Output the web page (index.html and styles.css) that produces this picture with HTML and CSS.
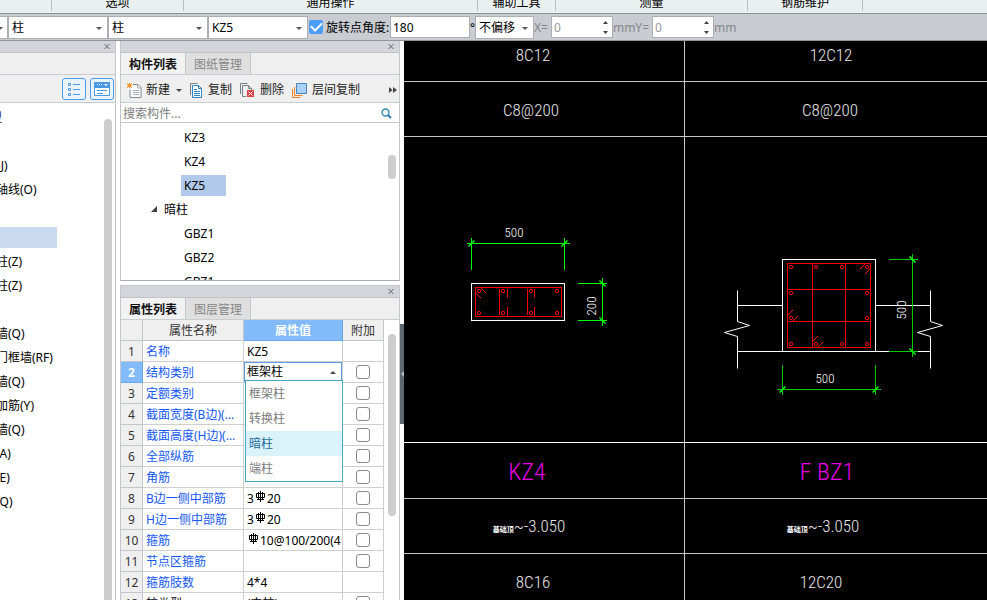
FILE: index.html
```html
<!DOCTYPE html>
<html lang="zh-CN">
<head>
<meta charset="utf-8">
<title>构件列表</title>
<link rel="stylesheet" href="styles.css">
</head>
<body>
<header class="ribbon">
  <div class="group g-first"></div>
  <div class="group g-options">选项</div>
  <div class="group g-common">通用操作</div>
  <div class="group g-aux">辅助工具</div>
  <div class="group g-measure">测量</div>
  <div class="group g-rebar">钢筋维护</div>
</header>

<div class="optbar">
  <div class="combo combo-cut"><select aria-label="楼层"><option></option></select><svg class="caret" viewBox="0 0 6 3"><path d="M0 0h6L3 3z"/></svg></div>
  <div class="combo"><select aria-label="构件分类"><option>柱</option></select><svg class="caret" viewBox="0 0 6 3"><path d="M0 0h6L3 3z"/></svg></div>
  <div class="combo"><select aria-label="构件类型"><option>柱</option></select><svg class="caret" viewBox="0 0 6 3"><path d="M0 0h6L3 3z"/></svg></div>
  <div class="combo"><select aria-label="构件"><option>KZ5</option></select><svg class="caret" viewBox="0 0 6 3"><path d="M0 0h6L3 3z"/></svg></div>
  <label class="rotate"><input type="checkbox" class="tick" checked><span>旋转点角度:</span></label>
  <input class="angle" type="text" value="180" aria-label="旋转点角度">
  <span class="degree">°</span>
  <div class="combo combo-small"><select aria-label="偏移"><option>不偏移</option></select><svg class="caret" viewBox="0 0 6 3"><path d="M0 0h6L3 3z"/></svg></div>
  <label class="unit" for="offx">X=</label>
  <div class="spin"><input id="offx" type="text" value="0" disabled><svg viewBox="0 0 5 13"><path d="M0 3h5L2.5 0zM0 10h5L2.5 13z"/></svg></div>
  <span class="unit">mm</span><label class="unit" for="offy">Y=</label>
  <div class="spin"><input id="offy" type="text" value="0" disabled><svg viewBox="0 0 5 13"><path d="M0 3h5L2.5 0zM0 10h5L2.5 13z"/></svg></div>
  <span class="unit">mm</span>
</div>

<div class="work">
  <aside class="nav">
    <div class="titlebar"><button class="close" aria-label="关闭"><svg viewBox="0 0 6 5"><path d="M.5 0l5 5M5.5 0l-5 5"/></svg></button></div>
    <div class="nav-head"></div>
    <div class="nav-tools">
      <button class="view" aria-label="列表"><svg width="14" height="14" viewBox="0 0 14 14"><path d="M1.500 1.500h2v2h-2zM1.500 6.500h2v2h-2zM1.500 11.500h2v2h-2zM6 2.500h7M6 7.500h7M6 12.500h7" fill="none" stroke="#4a98e6"/></svg></button>
      <button class="view" aria-label="卡片"><svg width="16" height="14" viewBox="0 0 16 14"><path d="M.5.5h15v13h-15z" fill="#fff" stroke="#4a98e6"/><path d="M0 0h16v6h-16z" fill="#4a98e6"/><path d="M3 2.500h1M5 2.500h1M7 2.500h1" stroke="#fff"/><path d="M10 2h4l-2 2z" fill="#fff"/><path d="M3 8.500h10M3 11.500h6" stroke="#4a98e6"/></svg></button>
    </div>
    <div class="nav-body">
      <ul class="nav-list">
        <li class="navy">型</li><li></li><li>(J)</li><li>轴线(O)</li><li></li><li class="current"></li>
        <li>柱(Z)</li><li>柱(Z)</li><li></li><li>墙(Q)</li><li>门框墙(RF)</li><li>墙(Q)</li><li>加筋(Y)</li><li>墙(Q)</li><li>(A)</li><li>(E)</li><li>(Q)</li>
      </ul>
      <div class="scroll nav-scroll"></div>
    </div>
  </aside>

  <div class="middle">
    <section class="panel panel-list">
      <div class="titlebar"><button class="close" aria-label="关闭"><svg viewBox="0 0 6 5"><path d="M.5 0l5 5M5.5 0l-5 5"/></svg></button></div>
      <div class="tabs"><button class="tab on">构件列表</button><button class="tab">图纸管理</button></div>
      <div class="tools">
        <button class="tool t-new"><svg width="15" height="15" viewBox="0 0 15 15"><path d="M6 1.500h5l3 3v10h-11v-8" fill="#fff" stroke="#7d8c98"/><path d="M10.500 1.500v3.500h3.500M6 7.500h6M6 9.500h6M6 11.500h6" fill="none" stroke="#a9b3bb"/><path d="M0 0l5 5M5 0l-5 5M2.500 0v5M0 2.500h5" stroke="#f0932b"/></svg>新建<svg class="caret-in" width="6" height="3" viewBox="0 0 6 3"><path d="M0 0h6L3 3z"/></svg></button>
        <button class="tool"><svg width="13" height="15" viewBox="0 0 13 15"><path d="M.5 12v-11.500h7" fill="none" stroke="#75828c"/><path d="M2.500 2.500h6l3 3v9h-9z" fill="#fff" stroke="#2c83c8"/><path d="M8.500 2.500v3h3M4 6.500h3M4 8.500h6M4 10.500h6M4 12.500h6" fill="none" stroke="#2c83c8"/></svg>复制</button>
        <button class="tool"><svg width="15" height="15" viewBox="0 0 15 15"><path d="M.5 11v-10.500h7M6 13.500h-3.500v-11h6l3 3v2M8.500 2.500v3h3" fill="none" stroke="#75828c"/><path d="M7 7h7v7h-7z" fill="#d64545"/><path d="M8.500 8.500l4 4M12.500 8.500l-4 4" stroke="#fff"/></svg>删除</button>
        <button class="tool"><svg width="15" height="15" viewBox="0 0 15 15"><path d="M.5 6v8.500h8M2.500 4v8.500h8" fill="none" stroke="#ef7d28"/><path d="M4.500.5h10v10h-10z" fill="#a9d0fa" stroke="#4a84bd"/></svg>层间复制</button>
        <button class="more" aria-label="更多"><svg width="8" height="6" viewBox="0 0 8 6"><path d="M0 0l3.500 3L0 6zM4 0l4 3L4 6z"/></svg></button>
      </div>
      <div class="search"><input type="text" placeholder="搜索构件..." aria-label="搜索构件"><svg width="11" height="11" viewBox="0 0 11 11"><circle cx="4.500" cy="4.500" r="3.500" fill="#eef7fd" stroke="#3c8dbc" stroke-width="1.400"/><path d="M7 7l3 3" stroke="#2f7db5" stroke-width="2"/></svg></div>
      <div class="tree-body">
        <ul class="tree">
          <li><span>KZ3</span></li><li><span>KZ4</span></li><li><span class="picked">KZ5</span></li>
          <li class="branch"><svg width="6" height="6" viewBox="0 0 6 6"><path d="M6 0v6h-6z" fill="#404040"/></svg><span>暗柱</span></li>
          <li><span>GBZ1</span></li><li><span>GBZ2</span></li><li><span>GBZ1</span></li>
        </ul>
        <div class="scroll tree-scroll"></div>
      </div>
    </section>

    <section class="panel panel-props">
      <div class="titlebar"><button class="close" aria-label="关闭"><svg viewBox="0 0 6 5"><path d="M.5 0l5 5M5.500 0l-5 5"/></svg></button></div>
      <div class="tabs"><button class="tab on">属性列表</button><button class="tab">图层管理</button></div>
      <div class="props-body">
        <table class="props">
          <colgroup><col class="c-no"><col class="c-name"><col class="c-val"><col class="c-add"></colgroup>
          <thead><tr><th></th><th>属性名称</th><th class="hot">属性值</th><th>附加</th></tr></thead>
          <tbody>
            <tr><th>1</th><td class="name">名称</td><td>KZ5</td><td></td></tr>
            <tr><th class="hot">2</th><td class="name">结构类别</td><td class="editing">
              <button class="value-combo" aria-haspopup="listbox" aria-expanded="true">框架柱<svg width="6" height="3" viewBox="0 0 6 3"><path d="M0 3h6L3 0z" fill="#444"/></svg></button>
              <ul class="menu" role="listbox"><li role="option">框架柱</li><li role="option">转换柱</li><li role="option" class="over">暗柱</li><li role="option">端柱</li></ul>
            </td><td class="add"><input type="checkbox" aria-label="附加 2"></td></tr>
            <tr><th>3</th><td class="name">定额类别</td><td></td><td class="add"><input type="checkbox" aria-label="附加 3"></td></tr>
            <tr><th>4</th><td class="name">截面宽度(B边)(...</td><td></td><td class="add"><input type="checkbox" aria-label="附加 4"></td></tr>
            <tr><th>5</th><td class="name">截面高度(H边)(...</td><td></td><td class="add"><input type="checkbox" aria-label="附加 5"></td></tr>
            <tr><th>6</th><td class="name">全部纵筋</td><td></td><td class="add"><input type="checkbox" aria-label="附加 6"></td></tr>
            <tr><th>7</th><td class="name">角筋</td><td></td><td class="add"><input type="checkbox" aria-label="附加 7"></td></tr>
            <tr><th>8</th><td class="name">B边一侧中部筋</td><td>3<svg class="bar" viewBox="0 0 11 11"><use href="#rebar"/></svg>20</td><td class="add"><input type="checkbox" aria-label="附加 8"></td></tr>
            <tr><th>9</th><td class="name">H边一侧中部筋</td><td>3<svg class="bar" viewBox="0 0 11 11"><use href="#rebar"/></svg>20</td><td class="add"><input type="checkbox" aria-label="附加 9"></td></tr>
            <tr><th>10</th><td class="name">箍筋</td><td><svg class="bar" viewBox="0 0 11 11"><use href="#rebar"/></svg>10@100/200(4</td><td class="add"><input type="checkbox" aria-label="附加 10"></td></tr>
            <tr><th>11</th><td class="name">节点区箍筋</td><td></td><td class="add"><input type="checkbox" aria-label="附加 11"></td></tr>
            <tr><th>12</th><td class="name">箍筋肢数</td><td>4*4</td><td></td></tr>
            <tr><th>13</th><td class="name plain">柱类型</td><td>(中柱)</td><td class="add"><input type="checkbox" aria-label="附加 13"></td></tr>
          </tbody>
        </table>
        <div class="scroll props-scroll"></div>
      </div>
    </section>
  </div>

  <div class="splitter"><button aria-label="折叠"><svg width="3" height="6" viewBox="0 0 3 6"><path d="M3 0v6L0 3z" fill="#b8c0c8"/></svg></button></div>

  <main class="canvas">
    <svg width="100%" height="100%">
      <defs>
        <g id="rebar" fill="none" stroke="#000"><path d="M5.500 0v11M1.500 2.500h8v4h-8zM3.500 1v7M7.500 1v7M2 8.500h7"/></g>
        <g id="tick" fill="none" stroke="#0f0"><path d="M-3 3L3-3" stroke-width="1.500"/></g>
        <circle id="dot" r="1.700" fill="none" stroke="#f00"/>
        <path id="brk" d="M0 0v31l12 4-25 7 13 4v32" fill="none" stroke="#fff"/>
      </defs>
      <g stroke="#c8c8c8" shape-rendering="crispEdges">
        <path d="M280.500 0v559"/>
        <line x1="0" x2="100%" y1="40.500" y2="40.500"/><line x1="0" x2="100%" y1="95.500" y2="95.500"/>
        <line x1="0" x2="100%" y1="401.500" y2="401.500" stroke="#fff"/><line x1="0" x2="100%" y1="457.500" y2="457.500"/>
        <line x1="0" x2="100%" y1="512.500" y2="512.500"/>
      </g>
      <g class="cad">
        <text x="129" y="20">8C12</text><text x="427" y="20">12C12</text>
        <text x="127" y="75">C8@200</text><text x="426" y="75">C8@200</text>
        <text x="125" y="491"><tspan class="squash">基础顶</tspan>~-3.050</text>
        <text x="419" y="491"><tspan class="squash">基础顶</tspan>~-3.050</text>
        <text x="129" y="547">8C16</text><text x="417" y="547">12C20</text>
      </g>
      <g class="cad mark"><text x="123" y="439">KZ4</text><text x="423" y="439">F BZ1</text></g>
      <g class="cad dim">
        <text x="110" y="196">500</text><text x="421" y="342">500</text>
        <text transform="translate(192 265) rotate(-90)">200</text><text transform="translate(502 269) rotate(-90)">500</text>
      </g>

      <g fill="none" shape-rendering="crispEdges">
        <path d="M67.500 242.500h93v37h-93z" stroke="#fff"/>
        <path d="M71.500 246.500h86v29h-86zM95.500 248v26M103.500 248v9M103.500 266v9M123.500 248v26M130.500 248v9M130.500 266v9" stroke="#f00000"/>
        <path d="M67.500 197v32M160.500 197v32M63 202.500h103M174 242.500h29M174 279.500h29M198.500 237v48" stroke="#0f0"/>
      </g>
      <path d="M72 252l5 5M77 247l5 5" stroke="#f00"/>
      <use href="#tick" x="67.500" y="202.500"/><use href="#tick" x="160.500" y="202.500"/>
      <use href="#tick" transform="translate(198.500 242.500) rotate(90)"/><use href="#tick" transform="translate(198.500 279.500) rotate(90)"/>
      <use href="#dot" x="75" y="250"/><use href="#dot" x="99" y="250"/><use href="#dot" x="127" y="250"/><use href="#dot" x="153" y="250"/>
      <use href="#dot" x="75" y="272"/><use href="#dot" x="99" y="272"/><use href="#dot" x="127" y="272"/><use href="#dot" x="153" y="272"/>

      <g fill="none" shape-rendering="crispEdges">
        <path d="M378.500 310.500v-92h93v92M333 264.500h45M472 264.500h55M333 310.500h194" stroke="#fff"/>
        <path d="M383.500 222.500h83v84h-83zM408.500 222v85M441.500 222v85M383 248.500h84M383 280.500h84" stroke="#f00000"/>
        <path d="M485 218.500h29M485 310.500h29M508.500 213v103M378.500 324v30M471.500 324v30M373 348.500h104" stroke="#0c0"/>
      </g>
      <use href="#brk" x="333.500" y="249.500"/><use href="#brk" x="526.500" y="249.500"/>
      <path d="M456 228l6-6M461 233l6-6M383 275l6-6M388 281l6-6M408 301l6-6M413 307l6-6" stroke="#f00"/>
      <use href="#tick" x="378.500" y="348.500"/><use href="#tick" x="471.500" y="348.500"/>
      <use href="#tick" transform="translate(508.500 218.500) rotate(90)"/><use href="#tick" transform="translate(508.500 310.500) rotate(90)"/>
      <use href="#dot" x="387" y="226"/><use href="#dot" x="412" y="226"/><use href="#dot" x="438" y="226"/><use href="#dot" x="463" y="226"/>
      <use href="#dot" x="387" y="252"/><use href="#dot" x="463" y="252"/><use href="#dot" x="387" y="277"/><use href="#dot" x="463" y="277"/>
      <use href="#dot" x="387" y="303"/><use href="#dot" x="412" y="303"/><use href="#dot" x="438" y="303"/><use href="#dot" x="463" y="303"/>
    </svg>
  </main>
</div>
</body>
</html>
```

FILE: styles.css
```css
* { box-sizing: border-box; }
body, ul { margin: 0; padding: 0; }
ul { list-style: none; }
body {
  height: 100vh; overflow: hidden;
  display: flex; flex-direction: column;
  background: #fff; color: #000;
  font: 12px/16px "Noto Sans", "Noto Sans CJK SC", sans-serif;
}
button, input, select { font: inherit; color: inherit; margin: 0; padding: 0; border: 0; background: none; border-radius: 0; outline: 0; }

.ribbon { flex: none; display: flex; height: 14px; background: #eaf0f0; border-bottom: 1px solid #8b9096; overflow: hidden; align-items: flex-end; }
.group { height: 16px; border-right: 1px solid #b9bfc2; text-align: center; margin-bottom: 2px; line-height: 16px; white-space: nowrap; }
.g-first { width: 52px; }
.g-options { width: 132px; }
.g-common { width: 294px; }
.g-aux { width: 78px; }
.g-measure { width: 192px; }
.g-rebar { width: 115px; }

.optbar { flex: none; display: flex; align-items: center; height: 27px; background: #c9ccd1; border-bottom: 1px solid #92959a; white-space: nowrap; }
.combo { position: relative; flex: none; width: 100px; height: 23px; border: 1px solid #acafb3; background: #fff; }
.combo select { width: 100%; height: 100%; appearance: none; padding: 1px 0 0 3px; }
.combo-cut { width: 8px; border-left: 0; }
.combo-small { width: 59px; }
.caret { position: absolute; right: 5px; top: 10px; width: 6px; height: 3px; fill: #555; pointer-events: none; }
.combo-cut .caret { right: 4px; }
.rotate { display: flex; align-items: center; gap: 3px; width: 82px; padding-left: 1px; }
.rotate span, .unit, .degree { padding-top: 2px; }
.tick { appearance: none; width: 14px; height: 14px; border-radius: 2px; background: #4b9df8; display: grid; place-items: center; }
.tick::after { content: ""; width: 9px; height: 5px; border: solid #fff; border-width: 0 0 2px 2px; transform: rotate(-45deg); margin-bottom: 3px; }
.angle { width: 80px; height: 22px; border: 1px solid #acafb3; background: #fff; padding-left: 2px; }
.degree { width: 5px; }
.unit { color: #85888c; }
label.unit { padding-right: 3px; }
.spin { position: relative; width: 62px; height: 22px; border: 1px solid #acafb3; background: #fff; }
.spin input { width: 100%; height: 100%; padding-left: 2px; color: #999; }
.spin svg { position: absolute; right: 4px; top: 4px; width: 5px; height: 13px; fill: #444; }

.work { flex: 1; min-height: 0; display: flex; }
.titlebar { flex: none; height: 12px; display: flex; justify-content: flex-end; align-items: center; background: #d3d5da; border-bottom: 1px solid #c0c4ca; }
.close { width: 6px; height: 6px; margin-right: 5px; display: grid; }
.close svg { width: 6px; height: 5px; stroke: #666; fill: none; }

.nav { flex: none; width: 116px; border-right: 1px solid #c3c6cc; display: flex; flex-direction: column; overflow: hidden; }
.nav-head { flex: none; height: 22px; background: #efefef; border-bottom: 1px solid #c9ccd1; }
.nav-tools { flex: none; height: 28px; background: #efefef; border-bottom: 1px solid #c9ccd1; display: flex; justify-content: flex-end; align-items: center; gap: 4px; padding-right: 1px; }
.view { width: 24px; height: 22px; border: 1px solid #4a9cf0; border-radius: 3px; background: #eaf4fe; display: grid; place-items: center; }
.nav-body { flex: 1; min-height: 0; display: flex; justify-content: space-between; }
.nav-list { margin-left: -4px; padding-top: 3px; }
.nav-list li { height: 24px; line-height: 24px; white-space: nowrap; }
.nav-list .navy { color: #0a1a6a; width: 6px; overflow: hidden; direction: rtl; }
.nav-list .current { width: 61px; height: 21px; margin: 1px 0 2px; background: #c9d9f0; }
.scroll { flex: none; width: 8px; margin-right: 3px; border-radius: 4px; background: #cdcdcd; }
.nav-scroll { margin-top: 16px; border-radius: 4px 4px 0 0; }

.middle { flex: none; width: 280px; margin-left: 4px; display: flex; flex-direction: column; gap: 4px; }
.panel { display: flex; flex-direction: column; border: solid #c3c6cc; border-width: 0 1px; min-height: 0; }
.panel-list { flex: none; height: 240px; border-bottom: 1px solid #a9abae; }
.panel-props { flex: 1; border-top-width: 1px; }
.tabs { flex: none; display: flex; height: 22px; background: #efefef; border-bottom: 1px solid #c9ccd1; }
.tab { width: 65px; padding-top: 2px; border-right: 1px solid #c3c6cc; background: #dfdfdf; color: #868686; }
.tab.on { background: #f2f2f2; color: #111; font-weight: bold; }
.tools { flex: none; height: 28px; display: flex; align-items: center; gap: 8px; padding: 3px 2px 0 6px; background: #efefef; border-bottom: 1px solid #c9ccd1; }
.tool { display: flex; align-items: center; gap: 5px; white-space: nowrap; color: #222; }
.t-new { gap: 4px; }
.caret-in { margin-left: 2px; }
.caret-in, .more svg { fill: #444; }
.more { margin-left: auto; display: grid; }
.search { flex: none; height: 20px; display: flex; align-items: center; padding: 2px 7px 0 2px; border-bottom: 1px solid #c3c6cc; }
.search input { flex: 1; min-width: 0; }
.search input::placeholder { color: #808080; }
.tree-body { flex: 1; min-height: 0; display: flex; justify-content: space-between; overflow: hidden; }
.tree { padding: 2px 0 0 60px; }
.tree li { height: 24px; display: flex; align-items: center; }
.tree span { height: 21px; line-height: 21px; padding: 0 3px; }
.tree .picked { width: 45px; background: #b1caeb; }
.tree .branch { margin-left: -30px; gap: 4px; }
.tree-scroll { height: 24px; margin-top: 32px; }

.props-body { flex: 1; min-height: 0; display: flex; justify-content: space-between; overflow: hidden; }
.props { flex: none; width: 263px; table-layout: fixed; border-collapse: separate; border-spacing: 0; align-self: flex-start; }
.c-no { width: 22px; }
.c-name { width: 101px; }
.c-val { width: 99px; }
.c-add { width: 41px; }
.props tr { height: 21px; }
.props th, .props td { height: 21px; padding: 1px 0 0 3px; border: solid #cfcfcf; border-width: 0 1px 1px 0; line-height: 16px; white-space: nowrap; overflow: hidden; text-align: left; }
.props th { padding: 1px 0 0; font-weight: normal; text-align: center; background: #efefef; color: #333; border-color: #c3c6cc; }
.props .hot { background: #82bafa; color: #fff; font-weight: bold; border-color: #6ba8ea; }
.props .name { color: #1458f5; }
.props .plain { color: #000; }
.props .add { padding: 0; text-align: center; }
.add input { appearance: none; display: block; width: 14px; height: 14px; margin: 0 auto; border: 1px solid #8a8a8a; border-radius: 3px; background: #fff; }
.props .editing { position: relative; padding: 0; overflow: visible; }
.value-combo { display: flex; align-items: center; justify-content: space-between; width: 100%; height: 20px; padding: 0 5px 0 2px; border: 1px solid #5c9ee6; background: #fff; }
.menu { position: absolute; z-index: 2; top: 18px; left: 1px; right: -1px; border: 1px solid #45a5cc; background: #fff; }
.menu li { height: 25px; line-height: 25px; padding-left: 3px; color: #7b7b7b; }
.menu .over { background: #daf2fa; color: #1b6a9c; }
.bar { width: 11px; height: 11px; margin: 0 1px; vertical-align: 1px; }
.props-scroll { height: 182px; margin-top: 14px; }

.splitter { flex: none; width: 4px; display: flex; align-items: flex-start; background: #fff; }
.splitter button { width: 4px; height: 100px; margin-top: 283px; background: #5d6770; display: grid; place-items: center; }
.canvas { flex: 1; min-width: 0; background: #000; overflow: hidden; }
.canvas > svg { display: block; }
.cad { font: 300 17px "Roboto Condensed", Roboto, "Noto Sans CJK SC", sans-serif; fill: #e8e8e8; text-anchor: middle; }
.squash { font-size: 7px; font-weight: bold; fill: #fff; }
.mark { font-size: 24px; fill: #e800e8; }
.dim { font-size: 13px; fill: #fff; }
```
